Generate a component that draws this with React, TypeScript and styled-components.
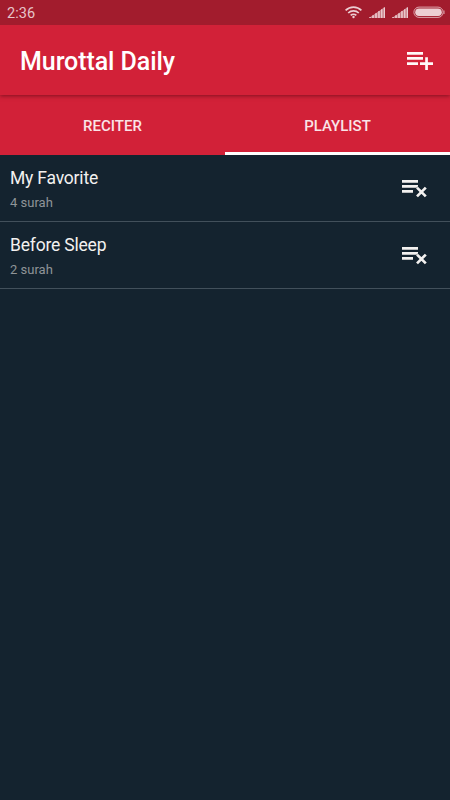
import React from 'react';
import styled, { createGlobalStyle } from 'styled-components';

const GlobalStyle = createGlobalStyle`
  * { box-sizing: border-box; }
  html, body { margin: 0; background: #14232f; }
  body { font-family: Roboto, 'Noto Sans', sans-serif; }
`;

const Screen = styled.div`
  display: flex;
  flex-direction: column;
  width: 100%;
  height: 100vh;
  min-height: 800px;
  background: #14232f;
  overflow: hidden;
`;

const StatusBar = styled.div`
  display: flex;
  justify-content: space-between;
  height: 25px;
  padding: 0 5px 0 7px;
  background: #a21c2d;
`;

const Clock = styled.span`
  color: #e6c4c9;
  font-size: 14.5px;
  line-height: 27px;
  letter-spacing: 0.1px;
`;

const StatusIcons = styled.div`
  display: flex;
  gap: 7px;
  padding-top: 6px;
  svg { display: block; flex: none; }
  svg:last-child { margin-left: -2px; }
`;

const AppBar = styled.header`
  z-index: 1;
  display: flex;
  align-items: center;
  justify-content: space-between;
  flex: none;
  height: 70px;
  padding: 2px 16px 0 20px;
  background: #d22138;
  box-shadow: 0 1px 4px rgba(50, 0, 10, 0.5);
  clip-path: inset(0 0 -8px 0);
`;

const Title = styled.h1`
  margin: 0;
  padding-top: 2px;
  color: #fff;
  font-size: 25px;
  font-weight: 500;
  line-height: 30px;
  letter-spacing: -0.07px;
`;

const IconButton = styled.button`
  display: block;
  flex: none;
  padding: 0;
  border: 0;
  background: none;
  svg { display: block; }
`;

const Tabs = styled.nav`
  display: grid;
  grid-template-columns: 1fr 1fr;
  flex: none;
  height: 60px;
  background: #d22138;
`;

const Tab = styled.button<{ $active?: boolean }>`
  padding: 4px 0 0;
  border: 0;
  border-bottom: 3px solid ${(p) => (p.$active ? '#fff' : 'transparent')};
  background: none;
  color: #fae4e7;
  font-family: inherit;
  font-size: 15px;
  font-weight: 500;
`;

const List = styled.ul`
  margin: 0;
  padding: 0;
  list-style: none;
`;

const Row = styled.li`
  display: flex;
  justify-content: space-between;
  height: 67px;
  padding: 12px 23px 0 10px;
  border-bottom: 1px solid #42505b;
`;

const RowTitle = styled.div`
  color: #f3f1f0;
  font-size: 17.5px;
  line-height: 22px;
  letter-spacing: -0.2px;
`;

const RowMeta = styled.div`
  margin-top: 5px;
  color: #8f9498;
  font-size: 13px;
  line-height: 18px;
`;

const RemoveSlot = styled.div`
  padding-top: 13px;
`;

const WifiIcon = () => (
  <svg width="17" height="13" viewBox="0 0 17 13" fill="none" stroke="#eccdd2" strokeWidth="1.7">
    <path d="M.6 4.4a11.2 11.2 0 0 1 15.8 0M3.2 7a7.5 7.5 0 0 1 10.6 0M5.7 9.4a4 4 0 0 1 5.6 0" />
    <circle cx="8.5" cy="11" r="1.2" fill="#eccdd2" stroke="none" />
  </svg>
);

const SignalIcon = () => (
  <svg width="16" height="12" viewBox="0 0 16 12">
    <path d="M0 12 16 1V12Z" fill="#d7959e" />
    <path d="M1 12v-1M4 12V9.2M7 12V7.2M10 12V5.1M12.8 12V3.2M15.3 12V1.4" stroke="#edcfd3" strokeWidth="1.3" />
    <path d="M2.5 12v-1.6M5.5 12V8.4M8.5 12V6.4M11.4 12V4.4M14.1 12V2.5" stroke="#bd6874" strokeWidth=".7" />
  </svg>
);

const BatteryIcon = () => (
  <svg width="32" height="13" viewBox="0 0 32 13">
    <rect x=".9" y="1.1" width="29.2" height="10.3" rx="5.1" fill="none" stroke="#dca4ac" />
    <rect x="2.2" y="2.4" width="26.6" height="7.7" rx="3.8" fill="#edcfd3" />
    <path d="M31 4.5v3.5" stroke="#dca4ac" />
  </svg>
);

const AddIcon = () => (
  <svg width="27" height="18" viewBox="0 0 27 18" fill="#fff8f8">
    <path d="M0 0h16v2.7H0zM0 5.1h16v2.7H0zM0 10.3h11v2.7H0z" />
    <path d="M18.2 5.2h2.7v5.1H26V13h-5.1v5h-2.7v-5H13v-2.7h5.2z" />
  </svg>
);

const RemoveIcon = () => (
  <svg width="25" height="18" viewBox="0 0 25 18">
    <path d="M0 0h16v2.7H0zM0 5h16v2.7H0zM0 10h11v2.7H0z" fill="#f3f1f0" />
    <path d="m14.9 7.5 9 9M23.9 7.5l-9 9" stroke="#14232f" strokeWidth="4" />
    <path d="m15 7.6 8.8 8.8M23.8 7.6 15 16.4" stroke="#f3f1f0" strokeWidth="2.7" />
  </svg>
);

const playlists = [
  { name: 'My Favorite', count: 4 },
  { name: 'Before Sleep', count: 2 },
];

export default function App() {
  return (
    <Screen>
      <GlobalStyle />
      <StatusBar>
        <Clock>2:36</Clock>
        <StatusIcons>
          <WifiIcon />
          <SignalIcon />
          <SignalIcon />
          <BatteryIcon />
        </StatusIcons>
      </StatusBar>
      <AppBar>
        <Title>Murottal Daily</Title>
        <IconButton aria-label="Add playlist"><AddIcon /></IconButton>
      </AppBar>
      <Tabs>
        <Tab>RECITER</Tab>
        <Tab $active>PLAYLIST</Tab>
      </Tabs>
      <List>
        {playlists.map((p) => (
          <Row key={p.name}>
            <div>
              <RowTitle>{p.name}</RowTitle>
              <RowMeta>{p.count} surah</RowMeta>
            </div>
            <RemoveSlot>
              <IconButton aria-label={`Remove ${p.name}`}><RemoveIcon /></IconButton>
            </RemoveSlot>
          </Row>
        ))}
      </List>
    </Screen>
  );
}
